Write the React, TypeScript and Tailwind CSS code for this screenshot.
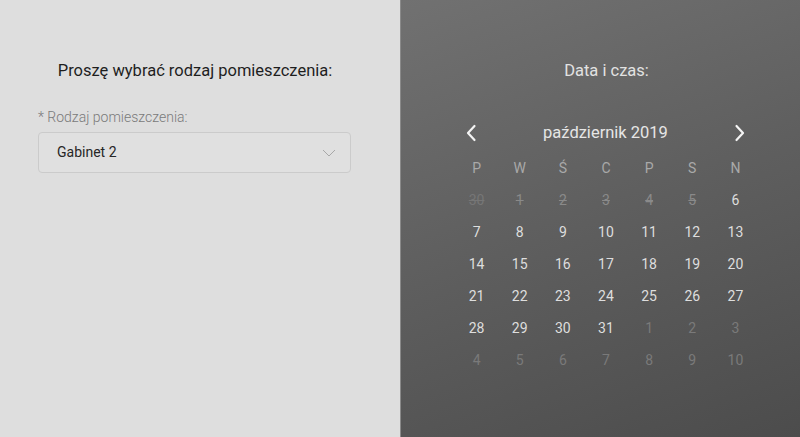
import React from "react";

type Cell = { d: string; kind: "past" | "cur" | "next" | "faint" };

function buildCells(): Cell[] {
  const cells: Cell[] = [];
  cells.push({ d: "30", kind: "faint" });
  for (let i = 1; i <= 5; i++) cells.push({ d: String(i), kind: "past" });
  for (let i = 6; i <= 31; i++) cells.push({ d: String(i), kind: "cur" });
  for (let i = 1; i <= 10; i++) cells.push({ d: String(i), kind: "next" });
  return cells;
}

export default function App() {
  const cells = buildCells();
  const days = ["P", "W", "Ś", "C", "P", "S", "N"];
  return (
    <div
      className="flex w-[800px] h-[437px] overflow-hidden"
      style={{ fontFamily: "Roboto, 'Noto Sans', sans-serif" }}
    >
      <div className="w-[400px] h-full bg-[#dedede] flex flex-col">
        <div className="mt-[60px] text-center text-[16.5px] leading-[22px] text-[#1e1e1e] pr-[10px]">
          Proszę wybrać rodzaj pomieszczenia:
        </div>
        <div className="mt-[26px] pl-[38px] text-[14px] leading-[18px] text-[#7a7a7a] font-light">
          * Rodzaj pomieszczenia:
        </div>
        <div className="ml-[38px] mt-[6px] w-[313px] h-[41px] border border-[#cbcbcb] rounded-[4px] flex items-center justify-between pl-[18px] pr-[14px] bg-[#e0e0e0]">
          <span className="text-[14px] text-[#262626]">Gabinet 2</span>
          <svg width="14" height="8" viewBox="0 0 14 8" fill="none">
            <path d="M1 1l6 6 6-6" stroke="#a8a8a8" strokeWidth="1" />
          </svg>
        </div>
      </div>
      <div className="w-px h-full bg-[#8a8a8a]" />
      <div className="flex-1 h-full bg-[linear-gradient(160deg,#717171_0%,#5e5e5e_50%,#4c4c4c_100%)] flex flex-col items-center">
        <div className="mt-[60px] text-[16.5px] leading-[22px] text-[#e2e2e2] pl-[12px]">
          Data i czas:
        </div>
        <div className="mt-[39px] w-[302px] ml-[11px]">
          <div className="flex items-center justify-between h-[24px] pl-[10px] pr-[11px]">
            <svg width="12" height="18" viewBox="0 0 12 18" fill="none">
              <path d="M9.5 2L3 9l6.5 7" stroke="#f4f4f4" strokeWidth="2.2" strokeLinecap="round" strokeLinejoin="round" />
            </svg>
            <span className="text-[16.5px] text-[#e6e6e6]">październik 2019</span>
            <svg width="12" height="18" viewBox="0 0 12 18" fill="none">
              <path d="M2.5 2L9 9l-6.5 7" stroke="#f4f4f4" strokeWidth="2.2" strokeLinecap="round" strokeLinejoin="round" />
            </svg>
          </div>
          <div className="grid grid-cols-7 mt-[7px]">
            {days.map((d, i) => (
              <div key={i} className="h-[32px] flex items-center justify-center text-[14px] text-[#a9a9a9]">
                {d}
              </div>
            ))}
            {cells.map((c, i) => (
              <div
                key={i}
                className={
                  "h-[32px] flex items-center justify-center text-[14px] " +
                  (c.kind === "cur"
                    ? "text-[#dedede]"
                    : c.kind === "past"
                    ? "text-[#8a8a8a] line-through"
                    : c.kind === "faint"
                    ? "text-[#767676] line-through"
                    : "text-[#7a7a7a]")
                }
              >
                {c.d}
              </div>
            ))}
          </div>
        </div>
      </div>
    </div>
  );
}
